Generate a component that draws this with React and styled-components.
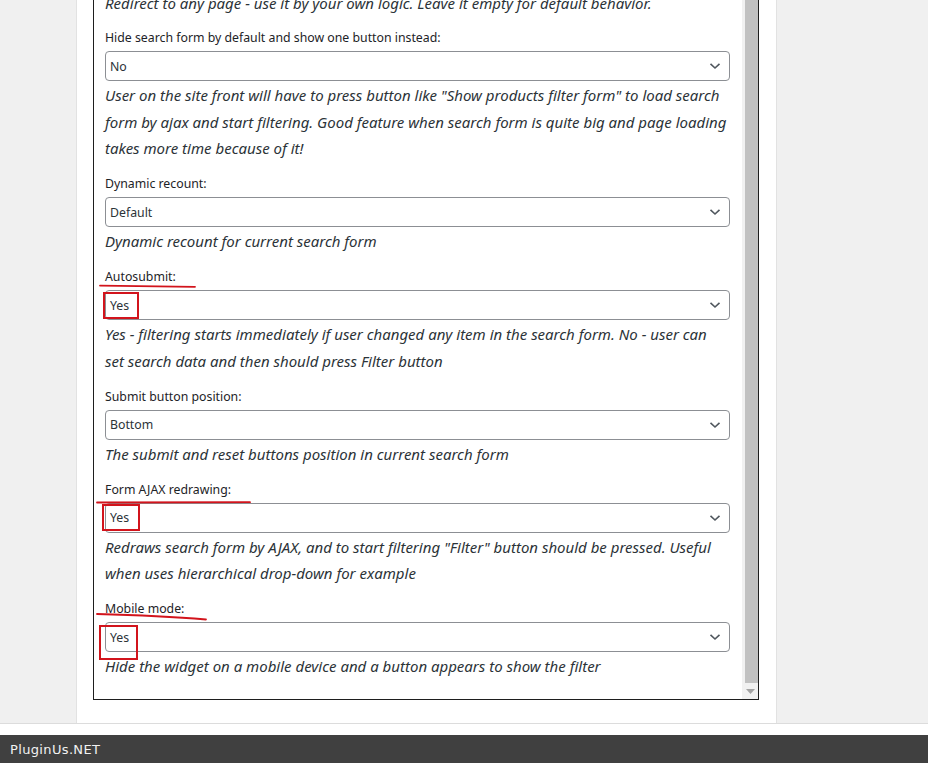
import React from "react";
import styled, { createGlobalStyle } from "styled-components";

const GlobalStyle = createGlobalStyle`
  html, body { margin: 0; padding: 0; background: #fff; }
  body { font-family: "Noto Sans", "Liberation Sans", sans-serif; }
  * { box-sizing: border-box; }
`;

const Page = styled.div`
  width: 928px;
  height: 763px;
  display: flex;
  flex-direction: column;
  overflow: hidden;
  background: #fff;
`;

const Main = styled.div`
  height: 724px;
  flex: none;
  display: flex;
  border-bottom: 1px solid #dcdcdc;
  overflow: hidden;
`;

const Gutter = styled.div`
  width: ${(p) => p.$w}px;
  flex: none;
  background: #f0f0f0;
  border-${(p) => p.$side}: 1px solid #e2e2e2;
`;

const Content = styled.div`
  flex: none;
  width: 699px;
  background: #fff;
  padding: 0 17px 0 16px;
`;

const Panel = styled.div`
  margin-top: -11px;
  height: 711px;
  border: 1px solid #1e1e1e;
  display: flex;
`;

const Scroller = styled.div`
  flex: 1;
  padding: 0 12px 0 11px;
  overflow: hidden;
`;

const ScrollTrack = styled.div`
  width: 16px;
  flex: none;
  background: #f1f1f1;
  display: flex;
  flex-direction: column;
  align-items: center;
`;

const Thumb = styled.div`
  flex: 1;
  width: 13px;
  margin-left: 2px;
  background: #c1c1c1;
`;

const ArrowBtn = styled.div`
  height: 16px;
  width: 16px;
  display: flex;
  align-items: center;
  justify-content: center;
`;

const Field = styled.div`
  position: relative;
  padding-bottom: 11.5px;
`;

const Label = styled.div`
  font-size: 12.3px;
  line-height: 20px;
  padding-top: 1px;
  color: #1d2327;
  margin-bottom: 3px;
`;

const SelectBox = styled.div`
  position: relative;
  height: 30px;
  border: 1px solid #8c8f94;
  border-radius: 4px;
  background: #fff;
  display: flex;
  align-items: center;
  justify-content: space-between;
  padding: 0 8px 0 4px;
  font-size: 12.3px;
  color: #2c3338;
`;

const Desc = styled.div`
  margin-top: 1px;
  padding-right: 1px;
  font-size: 15px;
  font-style: italic;
  line-height: 26.5px;
  color: #2c3338;
`;

const LeadDesc = styled(Desc)`
  margin-top: 0;
  margin-bottom: 10.5px;
`;

const RedBox = styled.div`
  position: absolute;
  left: ${(p) => p.$x}px;
  top: ${(p) => p.$y}px;
  width: ${(p) => p.$w}px;
  height: ${(p) => p.$h}px;
  border: 2px solid #d2141c;
  pointer-events: none;
`;

const Stroke = styled.svg`
  position: absolute;
  left: ${(p) => p.$x}px;
  top: ${(p) => p.$y}px;
  overflow: visible;
  pointer-events: none;
`;

const Footer = styled.div`
  margin-top: 11px;
  height: 28px;
  flex: none;
  background: #404040;
  color: #f2f2f2;
  font-family: "DejaVu Sans", "Liberation Sans", sans-serif;
  font-size: 13px;
  letter-spacing: 0.35px;
  display: flex;
  align-items: center;
  padding-left: 10px;
`;

const Chevron = () => (
  <svg width="12" height="8" viewBox="0 0 12 8">
    <path d="M1.5 1.8 L6 6 L10.5 1.8" fill="none" stroke="#50575e" strokeWidth="1.6" />
  </svg>
);

const fields = [
  {
    label: "Hide search form by default and show one button instead:",
    value: "No",
    desc:
      'User on the site front will have to press button like "Show products filter form" to load search form by ajax and start filtering. Good feature when search form is quite big and page loading takes more time because of it!',
  },
  { label: "Dynamic recount:", value: "Default", desc: "Dynamic recount for current search form" },
  {
    label: "Autosubmit:",
    value: "Yes",
    desc:
      "Yes - filtering starts immediately if user changed any item in the search form. No - user can set search data and then should press Filter button",
    mark: { line: "M0 0.6 C30 1.2 60 1.4 95 1.8", lx: -5, ly: 19, box: { x: -3, y: 1, w: 36, h: 27 } },
  },
  { label: "Submit button position:", value: "Bottom", desc: "The submit and reset buttons position in current search form" },
  {
    label: "Form AJAX redrawing:",
    value: "Yes",
    desc:
      'Redraws search form by AJAX, and to start filtering "Filter" button should be pressed. Useful when uses hierarchical drop-down for example',
    mark: { line: "M0 0.5 L153 0.2", lx: -8, ly: 23, box: { x: -4, y: 0, w: 38, h: 27 } },
  },
  {
    label: "Mobile mode:",
    value: "Yes",
    desc: "Hide the widget on a mobile device and a button appears to show the filter",
    mark: { line: "M0 0 C40 1 80 3 109 5.5", lx: -8, ly: 16, box: { x: -7, y: 2, w: 39, h: 35 } },
  },
];

export default function App() {
  return (
    <Page>
      <GlobalStyle />
      <Main>
        <Gutter $w={77} $side="right" />
        <Content>
          <Panel>
            <Scroller>
              <LeadDesc>
                Redirect to any page - use it by your own logic. Leave it empty for default behavior.
              </LeadDesc>
              {fields.map((f) => (
                <Field key={f.label}>
                  <Label>{f.label}</Label>
                  <SelectBox>
                    <span>{f.value}</span>
                    <Chevron />
                    {f.mark && (
                      <RedBox $x={f.mark.box.x} $y={f.mark.box.y} $w={f.mark.box.w} $h={f.mark.box.h} />
                    )}
                  </SelectBox>
                  {f.mark && (
                    <Stroke $x={f.mark.lx} $y={f.mark.ly} width="160" height="8">
                      <path d={f.mark.line} fill="none" stroke="#d2141c" strokeWidth="1.8" strokeLinecap="round" />
                    </Stroke>
                  )}
                  <Desc>{f.desc}</Desc>
                </Field>
              ))}
            </Scroller>
            <ScrollTrack>
              <Thumb />
              <ArrowBtn>
                <svg width="9" height="5" viewBox="0 0 9 5">
                  <path d="M0 0 H9 L4.5 5 Z" fill="#a3a3a3" />
                </svg>
              </ArrowBtn>
            </ScrollTrack>
          </Panel>
        </Content>
        <Gutter $w={152} $side="left" />
      </Main>
      <Footer>PluginUs.NET</Footer>
    </Page>
  );
}
